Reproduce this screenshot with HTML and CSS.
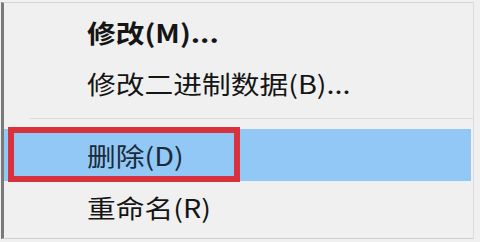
FILE: index.html
```html
<!DOCTYPE html>
<html lang="zh-CN">
<head>
    <meta charset="UTF-8">
    <title>右键菜单</title>
    <link rel="stylesheet" href="styles.css">
</head>
<body>
    <!-- 右键菜单 -->
    <div class="menu">
        <div class="item bold"><span class="label">修改(M)...</span></div>
        <div class="item"><span class="label">修改二进制数据(B)...</span></div>
        <div class="sep"></div>
        <div class="item active">
            <span class="label">删除(D)</span>
            <div class="mark"></div>
        </div>
        <div class="item"><span class="label">重命名(R)</span></div>
    </div>
</body>
</html>
```

FILE: styles.css
```css
body {
    margin: 0;
    padding: 0;
    background-color: #f0f0f0;
    font-family: "Noto Sans CJK SC", "Liberation Sans", sans-serif;
}

/* 菜单外框 */
.menu {
    margin: 2px 6px 0 1px;
    height: 237px;
    padding-top: 3px;
    box-sizing: border-box;
    background-color: #f0f0f0;
    border-left: 3px solid #7a7a7a;
    border-top: 1px solid #d4d4d4;
    border-right: 1px solid #dcdcdc;
    border-bottom: 1px solid #cfcfcf;
}

.item {
    position: relative;
    height: 51px;
    display: flex;
    align-items: center;
    padding-left: 83px;
    color: #151515;
    font-size: 25px;
}

.label {
    display: inline-block;
    transform: scaleX(1.15);
    transform-origin: left center;
    white-space: nowrap;
}

.bold {
    font-weight: bold;
}

.sep {
    height: 21px;
    display: flex;
    align-items: center;
    padding-left: 26px;
}

.sep::after {
    content: "";
    flex: 1;
    height: 1px;
    background-color: #dadada;
}

/* 选中项 */
.active {
    margin-right: 2px;
    height: 52px;
    background-color: #91c8f6;
    color: #1c2a3a;
}

/* 红色标注框 */
.mark {
    position: absolute;
    left: 4px;
    top: -2px;
    width: 232px;
    height: 55px;
    box-sizing: border-box;
    border: 6px solid #d8323f;
}
```
